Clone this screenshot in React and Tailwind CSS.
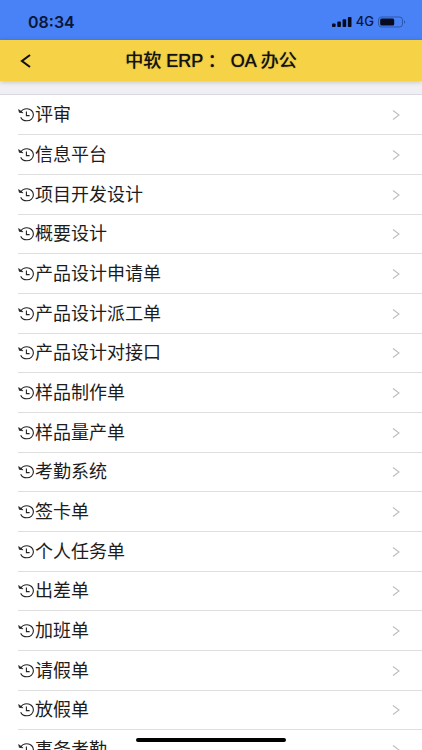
import React from "react";

const items = [
  "评审",
  "信息平台",
  "项目开发设计",
  "概要设计",
  "产品设计申请单",
  "产品设计派工单",
  "产品设计对接口",
  "样品制作单",
  "样品量产单",
  "考勤系统",
  "签卡单",
  "个人任务单",
  "出差单",
  "加班单",
  "请假单",
  "放假单",
  "事务考勤",
];

const HistoryIcon = () => (
  <svg className="w-4 h-4 shrink-0" viewBox="0 0 16 16" fill="none" stroke="#222" strokeWidth="1.1" aria-hidden="true">
    <path d="M2.6 5.4C3.8 3.1 6.1 1.8 8.9 1.8c3.7 0 6.5 2.6 6.5 6s-2.8 6-6.5 6c-2.8 0-5.2-1.3-6.2-3.6" />
    <path d="M0.6 2.6L1.3 5.4l3.8 0.4z" fill="#222" strokeWidth="0.6" />
    <path d="M8.4 4.6v4h3.2" />
  </svg>
);

const ChevronIcon = () => (
  <svg className="w-2 h-3 shrink-0" viewBox="0 0 8 12" fill="none" stroke="#bdbdbd" strokeWidth="1.1" aria-hidden="true">
    <path d="M1 1.5L7 6 1 10.5" />
  </svg>
);

const StatusBar = () => (
  <div className="flex items-center justify-between h-10 pt-1 pl-7 pr-4 bg-[#4882f6] text-[#0b1638]">
    <span className="font-['Inter'] text-base font-semibold">08:34</span>
    <div className="flex items-center gap-1">
      <svg className="w-5 h-3" viewBox="0 0 20 12" fill="#060c20" aria-hidden="true">
        <rect x="0" y="7.4" width="3.6" height="3.6" rx="0.8" />
        <rect x="5.3" y="5.6" width="3.6" height="5.4" rx="0.8" />
        <rect x="10.6" y="3.2" width="3.6" height="7.8" rx="0.8" />
        <rect x="15.9" y="1" width="3.6" height="10" rx="0.8" />
      </svg>
      <span className="font-['Inter'] text-[13px] font-medium">4G</span>
      <svg className="w-7 h-3" viewBox="0 0 28 12" aria-hidden="true">
        <rect x="0.5" y="1" width="24" height="10" rx="3" fill="none" stroke="#2f57a8" />
        <rect x="2.2" y="2.6" width="14" height="6.8" rx="1.5" fill="#060c20" />
        <path d="M26 4.2c1.6 0.6 1.6 3 0 3.6z" fill="#2f57a8" />
      </svg>
    </div>
  </div>
);

const Header = () => (
  <header className="relative flex items-center justify-center h-[41px] bg-[#f6d247] shadow-[0_1px_5px_rgba(0,0,0,0.2)]">
    <button type="button" aria-label="返回" className="absolute left-4 flex items-center justify-center w-5 h-8">
      <svg className="w-3 h-4" viewBox="0 0 12 16" fill="none" stroke="#111" strokeWidth="2.1" aria-hidden="true">
        <path d="M10 2L2 8l8 6" />
      </svg>
    </button>
    <h1 className="text-lg text-[#111] text-shadow-[0_0_1px_#111111]">中软 ERP ： OA 办公</h1>
  </header>
);

const App = () => {
  return (
    <div className="h-screen overflow-hidden bg-[#efeff4] font-['Liberation_Sans','Noto_Sans_CJK_SC',sans-serif]">
      <StatusBar />
      <Header />

      {/* Menu list */}
      <ul className="mt-[13px] pl-[18px] bg-white border-t border-[#dcd8e2]">
        {items.map((item) => (
          <li key={item} className="h-10 nth-[3n+1]:not-first:h-[39px] border-b border-[#dedede]">
            <a href="#" className="flex items-center h-full pr-[22px] text-lg text-[#1c1c1c]">
              <HistoryIcon />
              <span className="flex-1 ml-px">{item}</span>
              <ChevronIcon />
            </a>
          </li>
        ))}
      </ul>

      {/* Home indicator */}
      <div className="fixed bottom-2 left-1/2 -translate-x-1/2 w-[150px] h-1 rounded-full bg-black"></div>
    </div>
  );
};

export default App;
